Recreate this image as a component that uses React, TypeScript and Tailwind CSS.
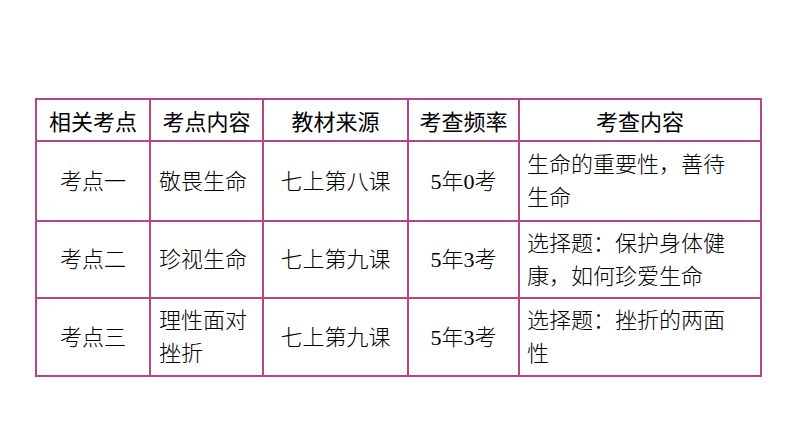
const rows = [
  { point: '考点一', topic: '敬畏生命', source: '七上第八课', freq: '5年0考', content: ['生命的重要性，善待', '生命'] },
  { point: '考点二', topic: '珍视生命', source: '七上第九课', freq: '5年3考', content: ['选择题：保护身体健', '康，如何珍爱生命'] },
  { point: '考点三', topic: '理性面对挫折', source: '七上第九课', freq: '5年3考', content: ['选择题：挫折的两面', '性'] },
]

const heights = ['h-[80px]', 'h-[77px]', 'h-[78px]']

export default function App() {
  return (
    <div className="w-[794px] h-[447px] bg-white pt-[98px] pl-[35px]">
      <table className="border-collapse table-fixed w-[725px] text-[22px] text-black font-light [font-family:'Liberation_Serif','Noto_Sans_CJK_SC',serif]">
        <colgroup>
          <col className="w-[114px]" />
          <col className="w-[113px]" />
          <col className="w-[145px]" />
          <col className="w-[111px]" />
          <col className="w-[242px]" />
        </colgroup>
        <thead>
          <tr className="h-[42px] [font-family:'Noto_Sans_CJK_SC',sans-serif]">
            {['相关考点', '考点内容', '教材来源', '考查频率', '考查内容'].map((h) => (
              <th key={h} className="border-2 border-[#b8458a] text-center font-normal leading-none p-0">
                {h}
              </th>
            ))}
          </tr>
        </thead>
        <tbody>
          {rows.map((r, i) => (
            <tr key={r.point} className={heights[i]}>
              <td className="border-2 border-[#b8458a] text-center leading-[33px] p-0">{r.point}</td>
              <td className="border-2 border-[#b8458a] leading-[33px] pl-[8px] pr-[12px] text-left">{r.topic}</td>
              <td className="border-2 border-[#b8458a] text-center leading-[33px] p-0">{r.source}</td>
              <td className="border-2 border-[#b8458a] text-center leading-[33px] p-0">{r.freq}</td>
              <td className="border-2 border-[#b8458a] leading-[33px] pl-[7px] pr-0 text-left">
                {r.content[0]}
                <br />
                {r.content[1]}
              </td>
            </tr>
          ))}
        </tbody>
      </table>
    </div>
  )
}
